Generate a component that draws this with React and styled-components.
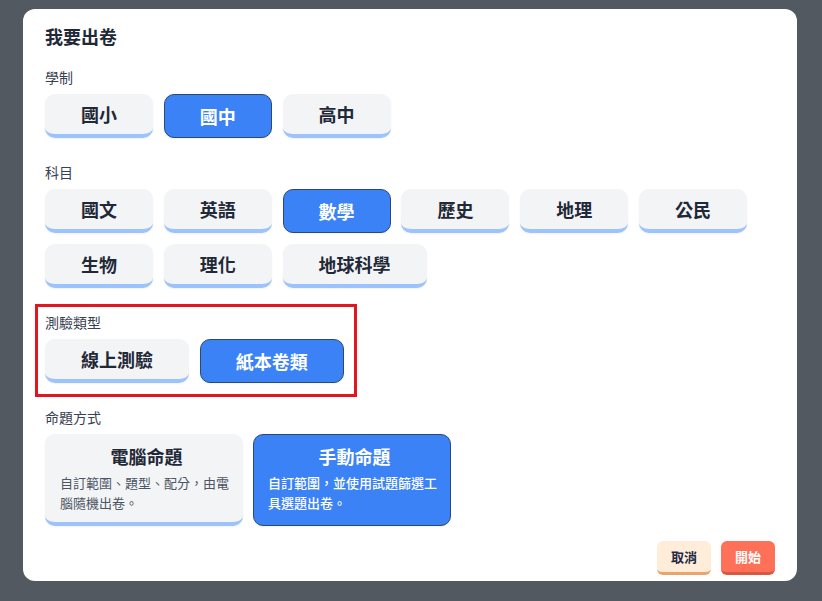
import React, { useState } from "react";
import styled, { createGlobalStyle } from "styled-components";

const GlobalStyle = createGlobalStyle`
  html, body {
    margin: 0;
    padding: 0;
    background: #525961;
    font-family: Inter, "Noto Sans CJK TC", "Noto Sans", sans-serif;
  }
  * { box-sizing: border-box; }
`;

const Backdrop = styled.div`
  width: 822px;
  height: 601px;
  padding: 9px 25px 0 23px;
  background: #525961;
  overflow: hidden;
`;

const Modal = styled.div`
  width: 774px;
  height: 572px;
  background: #ffffff;
  border-radius: 12px;
  padding: 17px 22px 0 22px;
  display: flex;
  flex-direction: column;
`;

const Title = styled.h2`
  margin: 0 0 18px;
  font-size: 18px;
  line-height: 24px;
  font-weight: 700;
  color: #1f2937;
`;

const Section = styled.section`
  position: relative;
  display: flex;
  flex-direction: column;
  margin-top: ${(p) => (p.$first ? "0" : "25px")};
  width: ${(p) => (p.$marked ? "fit-content" : "auto")};

  ${(p) =>
    p.$marked &&
    `
    &::after {
      content: "";
      position: absolute;
      top: -9px;
      left: -10px;
      right: -13px;
      bottom: -14px;
      border: 3px solid #e3151f;
      pointer-events: none;
    }
  `}
`;

const Label = styled.div`
  font-size: 14px;
  line-height: 20px;
  color: #374151;
  margin-bottom: 6px;
`;

const Options = styled.div`
  display: flex;
  flex-wrap: wrap;
  gap: 11px 10.8px;
  max-width: 720px;
`;

const Choice = styled.button`
  height: 44px;
  min-width: 108px;
  padding: ${(p) => (p.$active ? "0 35px" : "0 36px")};
  border-radius: 10px;
  font-family: inherit;
  font-size: 18px;
  font-weight: 700;
  cursor: pointer;
  border: ${(p) => (p.$active ? "1px solid #2b4a72" : "none")};
  border-bottom: ${(p) => (p.$active ? "1px solid #2b4a72" : "4px solid #9cc3fb")};
  background: ${(p) => (p.$active ? "#3b82f6" : "#f3f4f6")};
  color: ${(p) => (p.$active ? "#ffffff" : "#1f2937")};
  box-shadow: 0 1px 2px rgba(0, 0, 0, 0.06);
`;

const Cards = styled.div`
  display: flex;
  gap: 10px;
`;

const Card = styled.button`
  width: 198px;
  height: 92px;
  padding: ${(p) => (p.$active ? "10px 9px 0 14px" : "11px 10px 0 15px")};
  border-radius: 10px;
  text-align: left;
  font-family: inherit;
  cursor: pointer;
  display: flex;
  flex-direction: column;
  border: ${(p) => (p.$active ? "1px solid #2b4a72" : "none")};
  border-bottom: ${(p) => (p.$active ? "1px solid #2b4a72" : "4px solid #9cc3fb")};
  background: ${(p) => (p.$active ? "#3b82f6" : "#f3f4f6")};
  box-shadow: 0 1px 2px rgba(0, 0, 0, 0.06);
`;

const CardTitle = styled.div`
  font-size: 18px;
  line-height: 26px;
  font-weight: 700;
  text-align: center;
  margin-bottom: 2px;
  color: ${(p) => (p.$active ? "#ffffff" : "#1f2937")};
`;

const CardText = styled.div`
  font-size: 13px;
  line-height: 20px;
  font-weight: ${(p) => (p.$active ? 500 : 400)};
  color: ${(p) => (p.$active ? "#ffffff" : "#4b5563")};
`;

const Footer = styled.div`
  display: flex;
  justify-content: flex-end;
  gap: 10px;
  margin-top: 15px;
`;

const ActionButton = styled.button`
  width: 54px;
  height: 34px;
  border: none;
  border-radius: 6px;
  font-family: inherit;
  font-size: 13px;
  font-weight: 700;
  cursor: pointer;
  background: ${(p) => (p.$primary ? "#ff7058" : "#ffedd9")};
  color: ${(p) => (p.$primary ? "#ffffff" : "#1f2a44")};
  border-bottom: 3px solid ${(p) => (p.$primary ? "#d95842" : "#e9a46d")};
`;

const levels = ["國小", "國中", "高中"];
const subjects = ["國文", "英語", "數學", "歷史", "地理", "公民", "生物", "理化", "地球科學"];
const examTypes = ["線上測驗", "紙本卷類"];
const modes = [
  { key: "auto", title: "電腦命題", text: "自訂範圍、題型、配分，由電腦隨機出卷。" },
  { key: "manual", title: "手動命題", text: "自訂範圍，並使用試題篩選工具選題出卷。" },
];

export default function App() {
  const [level, setLevel] = useState("國中");
  const [subject, setSubject] = useState("數學");
  const [examType, setExamType] = useState("紙本卷類");
  const [mode, setMode] = useState("manual");

  return (
    <>
      <GlobalStyle />
      <Backdrop>
        <Modal>
          <Title>我要出卷</Title>

          <Section $first>
            <Label>學制</Label>
            <Options>
              {levels.map((l) => (
                <Choice key={l} $active={level === l} onClick={() => setLevel(l)}>
                  {l}
                </Choice>
              ))}
            </Options>
          </Section>

          <Section>
            <Label>科目</Label>
            <Options>
              {subjects.map((s) => (
                <Choice key={s} $active={subject === s} onClick={() => setSubject(s)}>
                  {s}
                </Choice>
              ))}
            </Options>
          </Section>

          <Section $marked>
            <Label>測驗類型</Label>
            <Options>
              {examTypes.map((t) => (
                <Choice key={t} $active={examType === t} onClick={() => setExamType(t)}>
                  {t}
                </Choice>
              ))}
            </Options>
          </Section>

          <Section>
            <Label>命題方式</Label>
            <Cards>
              {modes.map((m) => (
                <Card key={m.key} $active={mode === m.key} onClick={() => setMode(m.key)}>
                  <CardTitle $active={mode === m.key}>{m.title}</CardTitle>
                  <CardText $active={mode === m.key}>{m.text}</CardText>
                </Card>
              ))}
            </Cards>
          </Section>

          <Footer>
            <ActionButton>取消</ActionButton>
            <ActionButton $primary>開始</ActionButton>
          </Footer>
        </Modal>
      </Backdrop>
    </>
  );
}
